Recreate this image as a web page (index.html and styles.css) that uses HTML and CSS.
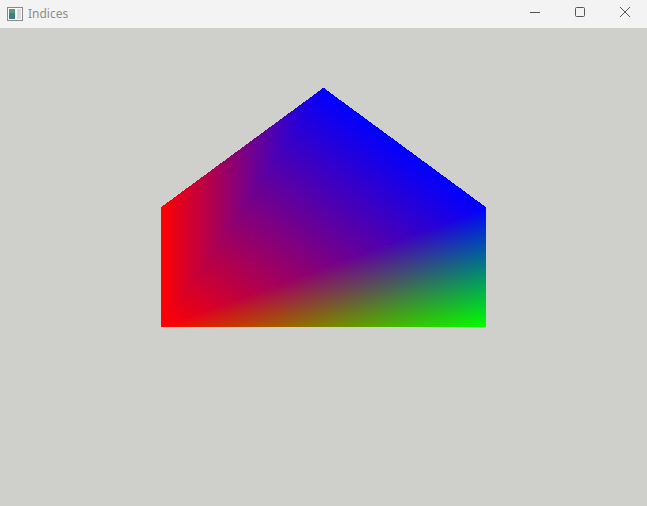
FILE: index.html
```html
<!DOCTYPE html>
<html>
<head>
<meta charset="utf-8">
<title>Indices</title>
<link rel="stylesheet" href="styles.css">
</head>
<body>
<div class="window">
  <div class="titlebar">
    <div class="title-left">
      <svg class="app-icon" width="16" height="14" viewBox="0 0 16 14">
        <rect x="0.5" y="0.5" width="15" height="13" fill="#fafafa" stroke="#8a8a8a"/>
        <rect x="2" y="2" width="6" height="10" fill="#3f7f84"/>
        <rect x="2" y="2" width="6" height="4" fill="#5a9a7a"/>
        <rect x="10" y="2" width="4" height="10" fill="#d8dde0"/>
      </svg>
      <span class="title">Indices</span>
    </div>
    <div class="controls">
      <div class="ctl">
        <svg width="12" height="12" viewBox="0 0 12 12"><path d="M1 6.5H11" stroke="#555" stroke-width="1"/></svg>
      </div>
      <div class="ctl">
        <svg width="12" height="12" viewBox="0 0 12 12"><rect x="1.5" y="1.5" width="9" height="9" rx="1" fill="none" stroke="#555" stroke-width="1"/></svg>
      </div>
      <div class="ctl">
        <svg width="12" height="12" viewBox="0 0 12 12"><path d="M1 1L11 11M11 1L1 11" stroke="#555" stroke-width="1"/></svg>
      </div>
    </div>
  </div>
  <canvas id="gl" class="viewport" width="647" height="478"></canvas>
</div>
<script src="script.js"></script>
</body>
</html>
```
FILE: styles.css
```css
html, body {
  margin: 0;
  padding: 0;
  background: #cfd0cc;
  overflow: hidden;
}
.window {
  width: 647px;
  height: 506px;
  display: flex;
  flex-direction: column;
}
.titlebar {
  height: 28px;
  flex: 0 0 28px;
  background: #f3f3f3;
  display: flex;
  align-items: center;
  justify-content: space-between;
}
.title-left {
  display: flex;
  align-items: center;
  padding-left: 7px;
  gap: 5px;
}
.app-icon {
  display: block;
}
.title {
  font-family: "Noto Sans", "Open Sans", sans-serif;
  font-size: 12px;
  color: #8c8c8c;
  line-height: 16px;
}
.controls {
  display: flex;
  height: 28px;
}
.ctl {
  width: 45px;
  height: 24px;
  display: flex;
  align-items: center;
  justify-content: center;
}
.ctl svg { display: block; }
.viewport {
  display: block;
  width: 647px;
  height: 478px;
  background: #cfd0cc;
}
```
FILE: script.js
```js
(function () {
  var c = document.getElementById('gl');
  var ctx = c.getContext('2d');
  var W = c.width, H = c.height;
  var img = ctx.createImageData(W, H);
  var d = img.data;
  var bg = [207, 208, 204];
  for (var i = 0; i < W * H; i++) {
    d[i * 4] = bg[0]; d[i * 4 + 1] = bg[1]; d[i * 4 + 2] = bg[2]; d[i * 4 + 3] = 255;
  }
  function P(x, y) { return [323.5 + x * 325, (1 - y) / 2 * H]; }
  var v = [
    { p: P(-0.5, -0.25), c: [255, 0, 0] },
    { p: P(0.5, -0.25), c: [0, 255, 0] },
    { p: P(0.5, 0.25), c: [0, 0, 255] },
    { p: P(-0.5, 0.25), c: [255, 0, 0] },
    { p: P(0, 0.75), c: [0, 0, 255] }
  ];
  var tris = [[0, 1, 2], [0, 2, 4], [0, 4, 3]];
  tris.forEach(function (t) {
    var a = v[t[0]], b = v[t[1]], e = v[t[2]];
    var minx = Math.floor(Math.min(a.p[0], b.p[0], e.p[0]));
    var maxx = Math.ceil(Math.max(a.p[0], b.p[0], e.p[0]));
    var miny = Math.floor(Math.min(a.p[1], b.p[1], e.p[1]));
    var maxy = Math.ceil(Math.max(a.p[1], b.p[1], e.p[1]));
    var area = (b.p[0] - a.p[0]) * (e.p[1] - a.p[1]) - (b.p[1] - a.p[1]) * (e.p[0] - a.p[0]);
    for (var y = Math.max(0, miny); y < Math.min(H, maxy); y++) {
      for (var x = Math.max(0, minx); x < Math.min(W, maxx); x++) {
        var px = x + 0.5, py = y + 0.5;
        var w0 = ((b.p[0] - px) * (e.p[1] - py) - (b.p[1] - py) * (e.p[0] - px)) / area;
        var w1 = ((e.p[0] - px) * (a.p[1] - py) - (e.p[1] - py) * (a.p[0] - px)) / area;
        var w2 = 1 - w0 - w1;
        var eps = -1e-6;
        if (w0 >= eps && w1 >= eps && w2 >= eps) {
          var k = (y * W + x) * 4;
          for (var ch = 0; ch < 3; ch++) {
            d[k + ch] = Math.round(w0 * a.c[ch] + w1 * b.c[ch] + w2 * e.c[ch]);
          }
        }
      }
    }
  });
  ctx.putImageData(img, 0, 0);
})();
```
